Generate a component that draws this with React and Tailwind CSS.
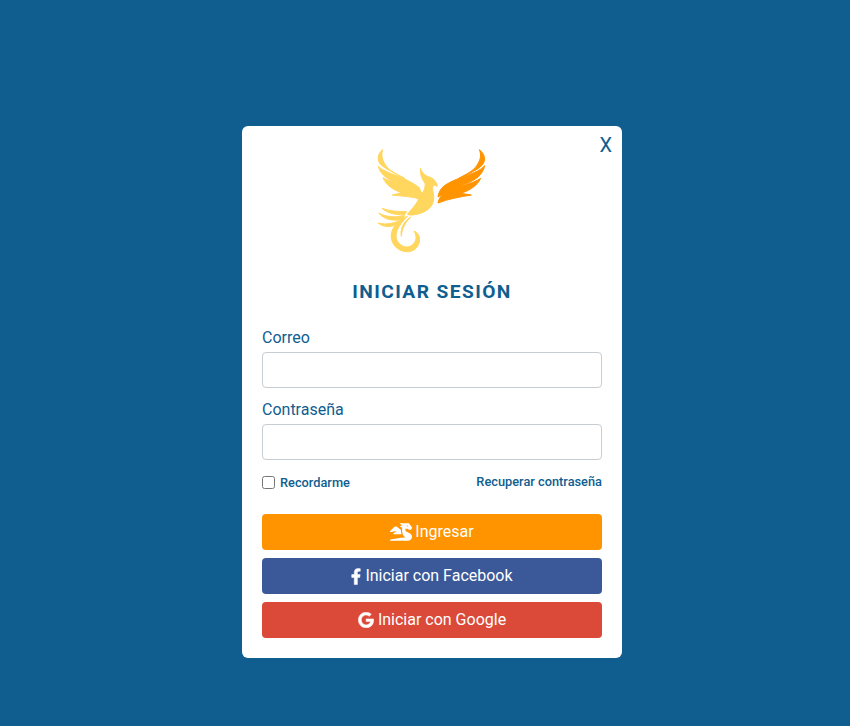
import { FaFacebookF, FaGoogle, FaDragon } from 'react-icons/fa';

function PhoenixLogo() {
  return (
    <svg viewBox="0 0 420 375" className="w-[140px] h-[125px]">
      {/* left wing */}
      <g fill="#ffd65e" stroke="#ffd65e" strokeWidth="3" strokeLinejoin="round">
        <path d="M68 44 C48 60 50 84 74 98 C94 110 118 122 134 130 C112 118 90 110 78 92 C68 78 62 62 68 44 Z" />
        <path d="M55 94 C74 116 136 124 178 158 L182 170 C146 152 96 146 72 122 C62 112 57 104 55 94 Z" />
        <path d="M69 128 C94 146 150 146 188 174 L184 194 C160 184 126 184 97 180 C106 177 116 176 126 174 C98 164 78 150 69 128 Z" />
        {/* body and head */}
        <path d="M181 100 C184 110 192 120 204 125 C220 128 230 140 232 154 L222 150 C216 154 218 164 220 176 C226 204 212 226 178 236 C162 240 150 242 142 238 C152 224 166 214 176 192 C188 176 198 158 195 144 C186 134 180 118 181 100 Z" />
        {/* lower feathers */}
        <path d="M66 220 C86 228 114 230 140 230 L132 240 C106 240 82 234 66 220 Z" />
        <path d="M56 234 C76 246 106 248 134 242 L124 254 C98 258 72 254 56 234 Z" />
        <path d="M54 264 C78 270 106 266 132 250 C112 274 80 284 54 264 Z" />
        {/* tail */}
        <path d="M142 244 C112 256 90 282 94 310 C98 336 122 352 146 350 C168 348 182 328 178 306 C176 298 170 292 162 288 C172 304 170 322 154 332 C138 342 118 332 110 314 C102 292 120 266 142 244 Z" />
        <path d="M152 246 C138 260 126 278 124 304 C120 282 130 260 152 246 Z" />
      </g>
      {/* right wing */}
      <g fill="#ff9300" stroke="#ff9300" strokeWidth="3" strokeLinejoin="round">
        <path d="M358 44 C378 60 380 82 358 98 C340 110 316 122 296 130 C318 118 340 108 350 92 C360 78 366 62 358 44 Z" />
        <path d="M374 92 C356 116 296 124 256 150 C244 158 236 170 234 186 C270 160 326 150 354 126 C366 114 372 104 374 92 Z" />
        <path d="M362 130 C340 146 286 156 248 178 C240 186 236 194 234 204 C264 192 298 186 334 180 C322 178 312 177 302 175 C330 166 352 152 362 130 Z" />
      </g>
    </svg>
  );
}

export default function App() {
  return (
    <div className="min-h-screen bg-[#0f5e8f] flex justify-center items-start pt-[126px] pl-[14px] font-['Roboto',sans-serif]">
      <div className="relative w-[380px] bg-white rounded-md px-5 pt-[9px] pb-5">
        <button className="absolute top-[7px] right-[10px] text-[20px] leading-6 text-[#0f5e8f]">X</button>

        <div className="flex justify-center pr-1">
          <PhoenixLogo />
        </div>

        <h2 className="mt-[19px] text-center text-[19.2px] leading-[26px] font-bold tracking-[1.4px] text-[#0f5e8f]">
          INICIAR SESIÓN
        </h2>

        <div className="mt-[21px]">
          <label className="block text-[16px] leading-6 mb-[2px] text-[#0f5e8f]">Correo</label>
          <input className="block w-full h-9 rounded border border-[#c8cdd2] bg-white" />
        </div>

        <div className="mt-[10px]">
          <label className="block text-[16px] leading-6 mb-[2px] text-[#0f5e8f]">Contraseña</label>
          <input type="password" className="block w-full h-9 rounded border border-[#c8cdd2] bg-white" />
        </div>

        <div className="mt-[14px] flex justify-between items-center h-4 text-[#0f5e8f] text-[12.8px] font-medium">
          <label className="flex items-center gap-[5px] pt-[1px]">
            <input type="checkbox" className="w-[13px] h-[13px]" />
            Recordarme
          </label>
          <a className="-mt-[1px]">Recuperar contraseña</a>
        </div>

        <div className="mt-[24px] flex flex-col gap-2 text-white text-[16px]">
          <button className="h-9 rounded bg-[#ff9300] flex items-center justify-center gap-[3px]">
            <FaDragon className="w-[22px] h-[18px]" />
            Ingresar
          </button>
          <button className="h-9 rounded bg-[#3b5998] flex items-center justify-center gap-1">
            <FaFacebookF className="w-[10px] h-[17px] stroke-[16px]" />
            Iniciar con Facebook
          </button>
          <button className="h-9 rounded bg-[#db4a39] flex items-center justify-center gap-1">
            <FaGoogle className="w-[16px] h-[16px] stroke-[16px]" />
            Iniciar con Google
          </button>
        </div>
      </div>
    </div>
  );
}
